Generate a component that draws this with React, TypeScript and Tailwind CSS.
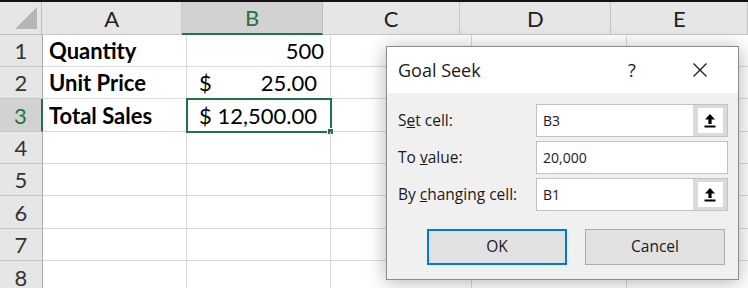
import React from 'react'

const cols = [
  { key: 'A', w: 'w-[144px]' },
  { key: 'B', w: 'w-[144px]' },
  { key: 'C', w: 'w-[141px]' },
  { key: 'D', w: 'w-[155px]' },
  { key: 'E', w: 'w-[140px]' },
]

const rowHeights = ['h-[32px]', 'h-[32px]', 'h-[33px]', 'h-[32px]', 'h-[32px]', 'h-[33px]', 'h-[32px]', 'h-[33px]']

function RefButton() {
  return (
    <div className="w-[34px] h-full bg-[#dadada] flex items-center justify-center">
      <div className="w-[25px] h-[25px] bg-white flex items-center justify-center">
        <svg width="12" height="15" viewBox="0 0 12 15">
          <path d="M6 1 L11 6.5 L7.6 6.5 L7.6 11 L4.4 11 L4.4 6.5 L1 6.5 Z" fill="#000" />
          <rect x="0.5" y="12.5" width="11" height="2" fill="#000" />
        </svg>
      </div>
    </div>
  )
}

function Field({ label, value, picker }: { label: React.ReactNode; value: string; picker?: boolean }) {
  return (
    <div className="flex items-center h-[33px]">
      <div className="w-[149px] pl-[11px] text-[15.5px] text-[#1a1a1a]">{label}</div>
      <div className="w-[192px] h-full border border-[#c2c2c2] bg-white flex items-stretch">
        <div className="flex-1 flex items-center pl-[6px] text-[14px] text-[#1a1a1a]">{value}</div>
        {picker && <RefButton />}
      </div>
    </div>
  )
}

function GoalSeek() {
  return (
    <div className="absolute left-[386px] top-[46px] w-[353px] h-[234px] border border-[#8c8c8c] bg-[#f0f0f0] shadow-[0_2px_18px_rgba(0,0,0,0.3)] font-['Open_Sans',sans-serif]">
      <div className="h-[46px] bg-white flex items-center pl-[11px] text-[18px] text-[#1a1a1a]">
        <span className="flex-1">Goal Seek</span>
        <span className="w-[20px] text-center mr-[50px] text-[18px]">?</span>
        <svg className="mr-[30px]" width="16" height="16" viewBox="0 0 16 16">
          <path d="M1.5 1.5 L14.5 14.5 M14.5 1.5 L1.5 14.5" stroke="#222" strokeWidth="1.4" />
        </svg>
      </div>
      <div className="pt-[11px] flex flex-col gap-[4px]">
        <Field label={<span>S<u>e</u>t cell:</span>} value="B3" picker />
        <Field label={<span>To <u>v</u>alue:</span>} value="20,000" />
        <Field label={<span>By <u>c</u>hanging cell:</span>} value="B1" picker />
      </div>
      <div className="flex gap-[18px] pl-[40px] pt-[18px]">
        <button className="w-[140px] h-[36px] border-2 border-[#0078d7] bg-[#e1e1e1] text-[15.5px] text-[#1a1a1a]">OK</button>
        <button className="w-[140px] h-[36px] border border-[#adadad] bg-[#e1e1e1] text-[15.5px] text-[#1a1a1a]">Cancel</button>
      </div>
    </div>
  )
}

export default function App() {
  const data: Record<number, { a: string; b: React.ReactNode }> = {
    1: { a: 'Quantity', b: <span className="ml-auto pr-[6px]">500</span> },
    2: {
      a: 'Unit Price',
      b: (
        <>
          <span className="pl-[12px]">$</span>
          <span className="ml-auto pr-[13px]">25.00</span>
        </>
      ),
    },
    3: {
      a: 'Total Sales',
      b: (
        <>
          <span className="pl-[12px]">$</span>
          <span className="ml-auto pr-[13px]">12,500.00</span>
        </>
      ),
    },
  }

  return (
    <div className="relative w-[748px] h-[288px] overflow-hidden bg-white font-['Lato',sans-serif]">
      <div className="h-[2px] bg-[#111]" />
      {/* Column headers */}
      <div className="flex h-[33px]">
        <div className="w-[43px] bg-[#e6e6e6] border-r border-b border-[#bdbdbd] relative">
          <svg className="absolute right-[4px] bottom-[5px]" width="22" height="22" viewBox="0 0 22 22">
            <path d="M22 0 L22 22 L0 22 Z" fill="#b5b5b5" />
          </svg>
        </div>
        {cols.map((c) =>
          c.key === 'B' ? (
            <div key={c.key} className={`${c.w} bg-[#d2d2d2] border-r border-[#bdbdbd] border-b-2 border-b-[#217346] flex items-center justify-center text-[22px] text-[#217346]`}>
              {c.key}
            </div>
          ) : (
            <div key={c.key} className={`${c.w} bg-[#e6e6e6] border-r border-b border-[#c6c6c6] flex items-center justify-center text-[22px] text-[#222]`}>
              {c.key}
            </div>
          )
        )}
      </div>
      {/* Rows */}
      {rowHeights.map((h, i) => {
        const r = i + 1
        const sel = r === 3
        const d = data[r]
        return (
          <div key={r} className={`flex ${h}`}>
            <div
              className={`w-[43px] shrink-0 flex items-center justify-center border-b text-[22px] ${
                sel
                  ? 'bg-[#d2d2d2] text-[#217346] border-r-2 border-r-[#217346] border-b-[#c6c6c6]'
                  : 'bg-[#e6e6e6] text-[#333] border-r border-r-[#ababab] border-b-[#c6c6c6]'
              }`}
            >
              {r}
            </div>
            <div className="w-[144px] shrink-0 border-r border-b border-[#d9d9d9] flex items-center pl-[6px] text-[22px] font-bold text-black">
              {d?.a}
            </div>
            <div className="w-[144px] shrink-0 border-r border-b border-[#d9d9d9] flex items-center text-[22px] text-black relative">
              {d?.b}
              {sel && (
                <div className="absolute -left-[1px] -top-[1px] w-[146px] h-[35px] border-2 border-[#217346]">
                  <div className="absolute -right-[4px] -bottom-[4px] w-[7px] h-[7px] bg-[#217346] border border-white" />
                </div>
              )}
            </div>
            <div className="w-[141px] shrink-0 border-r border-b border-[#d9d9d9]" />
            <div className="w-[155px] shrink-0 border-r border-b border-[#d9d9d9]" />
            <div className="w-[140px] shrink-0 border-r border-b border-[#d9d9d9]" />
          </div>
        )
      })}
      <GoalSeek />
    </div>
  )
}
